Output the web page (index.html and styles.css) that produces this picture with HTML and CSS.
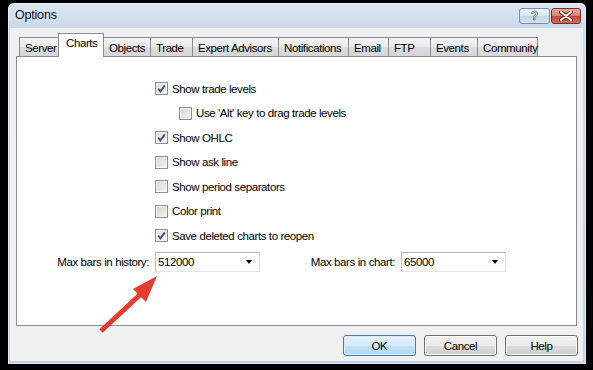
FILE: index.html
```html
<!DOCTYPE html>
<html lang="en">
<head>
  <meta charset="UTF-8">
  <title>Options</title>
  <link rel="stylesheet" href="styles.css">
</head>
<body>
  <!-- Dialog window -->
  <div class="window">
    <div class="titlebar">
      <span class="title">Options</span>
      <div class="caption-buttons">
        <div class="cbtn cbtn-help">?</div>
        <div class="cbtn cbtn-close">
          <svg width="14" height="10" viewBox="0 0 14 10">
            <path d="M2 1 L12 9 M12 1 L2 9" stroke="#5a231b" stroke-width="4" stroke-linecap="round"/>
            <path d="M2 1 L12 9 M12 1 L2 9" stroke="#fff" stroke-width="2" stroke-linecap="round"/>
          </svg>
        </div>
      </div>
    </div>

    <div class="client">
      <!-- Tabs -->
      <div class="tabs">
        <div class="tab">Server</div>
        <div class="tab active">Charts</div>
        <div class="tab">Objects</div>
        <div class="tab">Trade</div>
        <div class="tab">Expert Advisors</div>
        <div class="tab">Notifications</div>
        <div class="tab">Email</div>
        <div class="tab">FTP</div>
        <div class="tab">Events</div>
        <div class="tab">Community</div>
      </div>

      <!-- Charts page -->
      <div class="panel">
        <div class="check-list">
          <div class="check-row">
            <span class="checkbox checked"><svg width="11" height="11" viewBox="0 0 11 11"><path d="M2.2 5.6 L4.4 8.4 L8.8 2.4" fill="none" stroke="#3f5380" stroke-width="1.8"/></svg></span>
            <span>Show trade levels</span>
          </div>
          <div class="check-row indent">
            <span class="checkbox"></span>
            <span>Use 'Alt' key to drag trade levels</span>
          </div>
          <div class="check-row">
            <span class="checkbox checked"><svg width="11" height="11" viewBox="0 0 11 11"><path d="M2.2 5.6 L4.4 8.4 L8.8 2.4" fill="none" stroke="#3f5380" stroke-width="1.8"/></svg></span>
            <span>Show OHLC</span>
          </div>
          <div class="check-row">
            <span class="checkbox"></span>
            <span>Show ask line</span>
          </div>
          <div class="check-row">
            <span class="checkbox"></span>
            <span>Show period separators</span>
          </div>
          <div class="check-row">
            <span class="checkbox"></span>
            <span>Color print</span>
          </div>
          <div class="check-row">
            <span class="checkbox checked"><svg width="11" height="11" viewBox="0 0 11 11"><path d="M2.2 5.6 L4.4 8.4 L8.8 2.4" fill="none" stroke="#3f5380" stroke-width="1.8"/></svg></span>
            <span>Save deleted charts to reopen</span>
          </div>
        </div>

        <div class="fields">
          <label class="field-label label-history">Max bars in history:</label>
          <div class="combo"><span>512000</span><span class="combo-arrow"></span></div>
          <label class="field-label label-chart">Max bars in chart:</label>
          <div class="combo"><span>65000</span><span class="combo-arrow"></span></div>
        </div>
      </div>

      <!-- Dialog buttons -->
      <div class="buttons">
        <div class="button default">OK</div>
        <div class="button">Cancel</div>
        <div class="button">Help</div>
      </div>
    </div>
  </div>

  <!-- Red annotation arrow -->
  <svg class="annotation" width="593" height="370" viewBox="0 0 593 370">
    <line x1="101" y1="331" x2="143" y2="292" stroke="#e63b2e" stroke-width="5"/>
    <polygon points="157,276 133,289 146,302" fill="#e63b2e"/>
  </svg>
</body>
</html>
```

FILE: styles.css
```css
body {
  margin: 0;
  width: 593px;
  height: 370px;
  overflow: hidden;
  background: #000;
  font-family: "Liberation Sans", Arial, sans-serif;
  font-size: 11.5px;
  letter-spacing: -0.4px;
  color: #000;
}

/* Window frame */
.window {
  margin: 3px 0 0 8px;
  width: 578px;
  height: 361px;
  box-sizing: border-box;
  padding: 0 3px 3px 2px;
  border-radius: 6px 6px 0 0;
  background: linear-gradient(#dce6f3, #c9d9ec 26px, #bfd3ea);
  box-shadow: inset 0 0 0 1px rgba(255, 255, 255, 0.5);
  display: flex;
  flex-direction: column;
}

.titlebar {
  height: 25px;
  display: flex;
  align-items: flex-start;
}

.title {
  font-size: 12.5px;
  letter-spacing: -0.2px;
  margin: 5px 0 0 5px;
  color: #111;
}

.caption-buttons {
  margin: 5px 2px 0 auto;
  display: flex;
  gap: 1px;
}

.cbtn {
  height: 16px;
  box-sizing: border-box;
  border-radius: 3px;
  display: flex;
  align-items: center;
  justify-content: center;
}

.cbtn-help {
  width: 31px;
  border: 1px solid #7a8ba3;
  background: linear-gradient(#eef4fa, #d8e4f1 50%, #c4d5ea 51%, #d2e1f2);
  color: #fff;
  font-weight: bold;
  font-size: 12px;
  letter-spacing: 0;
  -webkit-text-stroke: 0.6px #45556b;
}

.cbtn-close {
  width: 30px;
  border: 1px solid #7b2c22;
  background: linear-gradient(#e7aa9c, #d5806f 50%, #c4483a 51%, #cf6d5c);
}

/* Client area */
.client {
  flex: 1;
  background: #f0f0f0;
  padding: 5px 5px 0 6px;
  display: flex;
  flex-direction: column;
}

.tabs {
  height: 23px;
  margin-left: 3px;
  display: grid;
  grid-template-columns: 39px 45px 47px 42px 86px 70px 40px 42px 47px 60px;
  align-items: end;
}

.tab {
  height: 19px;
  box-sizing: border-box;
  border: 1px solid #898c95;
  border-bottom: none;
  margin-right: -1px;
  background: linear-gradient(#f4f4f4, #ebebeb 50%, #dedede 51%, #d6d6d6);
  display: flex;
  align-items: center;
  padding: 1px 0 0 5px;
  white-space: nowrap;
}

.tab.active {
  height: 24px;
  margin: 0 -1px -1px 0;
  background: #fff;
  position: relative;
  z-index: 1;
  align-items: flex-start;
  padding: 3px 0 0 7px;
}

.panel {
  height: 270px;
  box-sizing: border-box;
  margin-right: 1px;
  background: #fff;
  border: 1px solid #898c95;
}

.check-list {
  padding: 25px 0 0 138px;
}

.check-row {
  display: flex;
  align-items: center;
  gap: 4px;
  height: 13px;
  margin-bottom: 11.5px;
}

.check-row:last-child {
  margin-bottom: 0;
}

.check-row.indent {
  margin-left: 24px;
}

.checkbox {
  width: 13px;
  height: 13px;
  box-sizing: border-box;
  border: 1px solid #8f8f8f;
  background: linear-gradient(135deg, #d2d2d2, #efefef 80%, #f7f7f7);
  box-shadow: inset 0 0 0 1px #f2f2f2;
  display: flex;
  align-items: center;
  justify-content: center;
  flex-shrink: 0;
}

.checkbox.checked {
  background: linear-gradient(135deg, #e0e0e0, #f6f6f6);
}

/* Bars fields */
.fields {
  margin-top: 10px;
  display: flex;
  align-items: center;
}

.field-label {
  text-align: right;
  margin-right: 6px;
}

.label-history {
  width: 132px;
}

.label-chart {
  width: 135px;
}

.combo {
  width: 105px;
  height: 20px;
  box-sizing: border-box;
  border: 1px solid #b5b8bf;
  border-right-color: #d9dde3;
  border-bottom-color: #e3e7ec;
  padding: 0 7px 0 2px;
  display: flex;
  align-items: center;
  justify-content: space-between;
  background: #fff;
}

.combo-arrow {
  width: 0;
  height: 0;
  border-left: 3.5px solid transparent;
  border-right: 3.5px solid transparent;
  border-top: 4px solid #000;
}

/* Dialog buttons */
.buttons {
  margin-top: 9px;
  display: flex;
  justify-content: flex-end;
  gap: 8px;
}

.button {
  width: 73px;
  height: 21px;
  box-sizing: border-box;
  border: 1px solid #707070;
  border-radius: 3px;
  background: linear-gradient(#f2f2f2, #ebebeb 50%, #dddddd 51%, #cfcfcf);
  box-shadow: inset 0 0 0 1px #fcfcfc;
  display: flex;
  align-items: center;
  justify-content: center;
}

.button.default {
  border-color: #3c7fb1;
  background: linear-gradient(#e5f2fb, #d6ebf8 50%, #c2e1f5 51%, #b3d8f1);
  box-shadow: inset 0 0 0 1px #d8ecf9;
}

/* Annotation overlay */
.annotation {
  position: absolute;
  top: 0;
  left: 0;
  pointer-events: none;
}
```
